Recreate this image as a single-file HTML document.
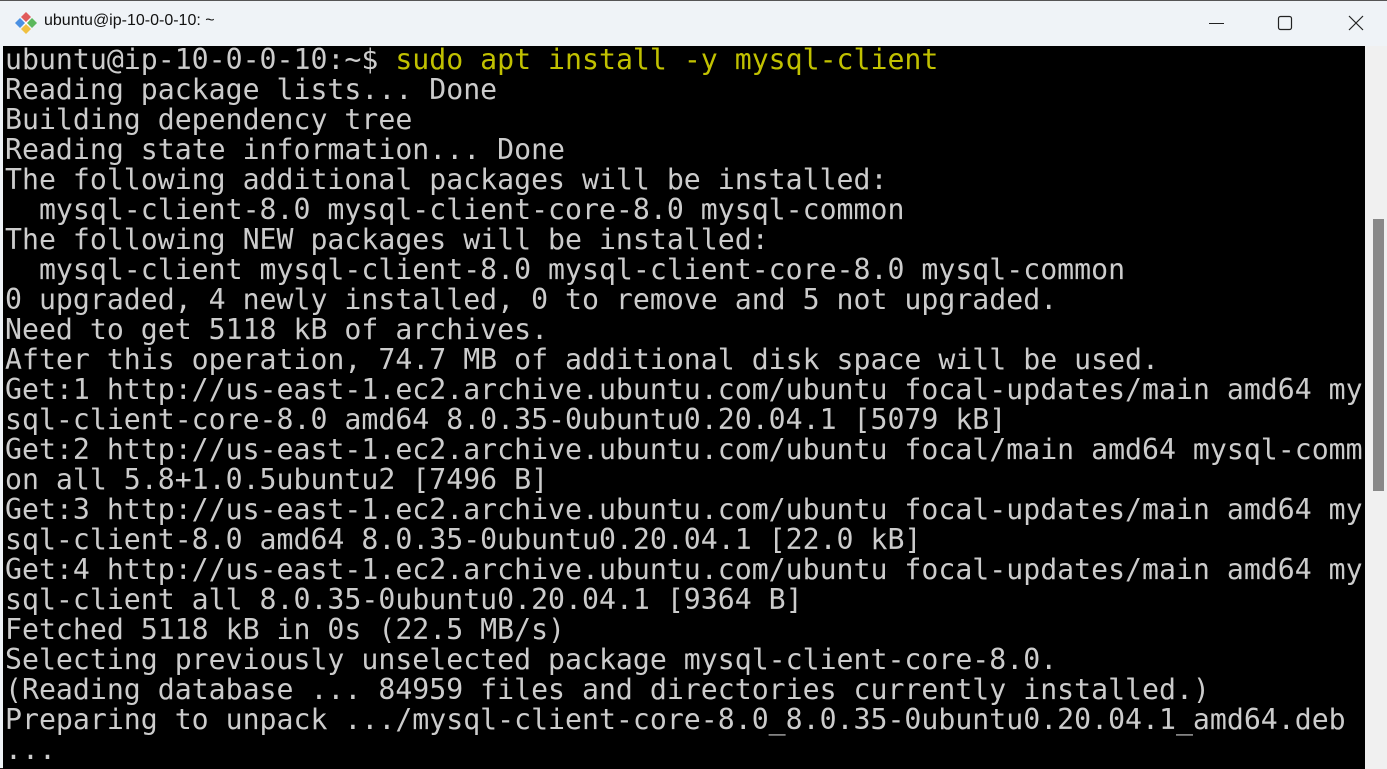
<!DOCTYPE html>
<html><head><meta charset="utf-8"><style>
html,body{margin:0;padding:0;width:1387px;height:768px;overflow:hidden;background:#202020;}
.win{position:absolute;left:0;top:0;width:1387px;height:768px;background:#eff3f7;border-top:1px solid #555;box-sizing:border-box;}
.title{position:absolute;left:44px;top:11px;font:16px "Liberation Sans",sans-serif;color:#111;}
.term{position:absolute;left:3px;top:45px;width:1362px;height:723px;background:#000;}
.sb{position:absolute;left:1365px;top:45px;width:22px;height:723px;background:#f0f0f0;}
.thumb{position:absolute;left:1373px;top:218px;width:11px;height:272px;background:#888;}
pre{position:absolute;left:5px;top:44px;margin:0;font-family:"DejaVu Sans Mono","Liberation Mono",monospace;font-size:28.2px;line-height:30px;color:#cccccc;letter-spacing:0;}
.y{color:#c1c100}
</style></head><body><div class="win">
<svg style="position:absolute;left:13px;top:11px" width="26" height="22" viewBox="0 0 26 22">
<polygon points="8,11 13,6 18,11 13,16" fill="#fff"/>
<polygon points="2,11 7,6 12,11 7,16" fill="#4a90e2"/>
<polygon points="8,5 13,0 18,5 13,10" fill="#e05a5a"/>
<polygon points="14,11 19,6 24,11 19,16" fill="#5cb85c"/>
<polygon points="8,17 13,12 18,17 13,22" fill="#f0c040"/>
</svg>
<div class="title">ubuntu@ip-10-0-0-10: ~</div>
<svg style="position:absolute;left:1209px;top:14px" width="16" height="16"><line x1="0" y1="8.5" x2="15" y2="8.5" stroke="#222" stroke-width="1"/></svg>
<svg style="position:absolute;left:1277px;top:14px" width="18" height="18"><rect x="1.5" y="1.5" width="13" height="13" rx="2" fill="none" stroke="#222" stroke-width="1.2"/></svg>
<svg style="position:absolute;left:1348px;top:14px" width="18" height="18"><path d="M1 1L15 15M15 1L1 15" stroke="#222" stroke-width="1.2"/></svg>
<div class="term"></div><div class="sb"></div><div class="thumb"></div>
<pre>ubuntu@ip-10-0-0-10:~$ <span class="y">sudo apt install -y mysql-client</span>
Reading package lists... Done
Building dependency tree
Reading state information... Done
The following additional packages will be installed:
  mysql-client-8.0 mysql-client-core-8.0 mysql-common
The following NEW packages will be installed:
  mysql-client mysql-client-8.0 mysql-client-core-8.0 mysql-common
0 upgraded, 4 newly installed, 0 to remove and 5 not upgraded.
Need to get 5118 kB of archives.
After this operation, 74.7 MB of additional disk space will be used.
Get:1 http://us-east-1.ec2.archive.ubuntu.com/ubuntu focal-updates/main amd64 my
sql-client-core-8.0 amd64 8.0.35-0ubuntu0.20.04.1 [5079 kB]
Get:2 http://us-east-1.ec2.archive.ubuntu.com/ubuntu focal/main amd64 mysql-comm
on all 5.8+1.0.5ubuntu2 [7496 B]
Get:3 http://us-east-1.ec2.archive.ubuntu.com/ubuntu focal-updates/main amd64 my
sql-client-8.0 amd64 8.0.35-0ubuntu0.20.04.1 [22.0 kB]
Get:4 http://us-east-1.ec2.archive.ubuntu.com/ubuntu focal-updates/main amd64 my
sql-client all 8.0.35-0ubuntu0.20.04.1 [9364 B]
Fetched 5118 kB in 0s (22.5 MB/s)
Selecting previously unselected package mysql-client-core-8.0.
(Reading database ... 84959 files and directories currently installed.)
Preparing to unpack .../mysql-client-core-8.0_8.0.35-0ubuntu0.20.04.1_amd64.deb
...</pre>
</div></body></html>
